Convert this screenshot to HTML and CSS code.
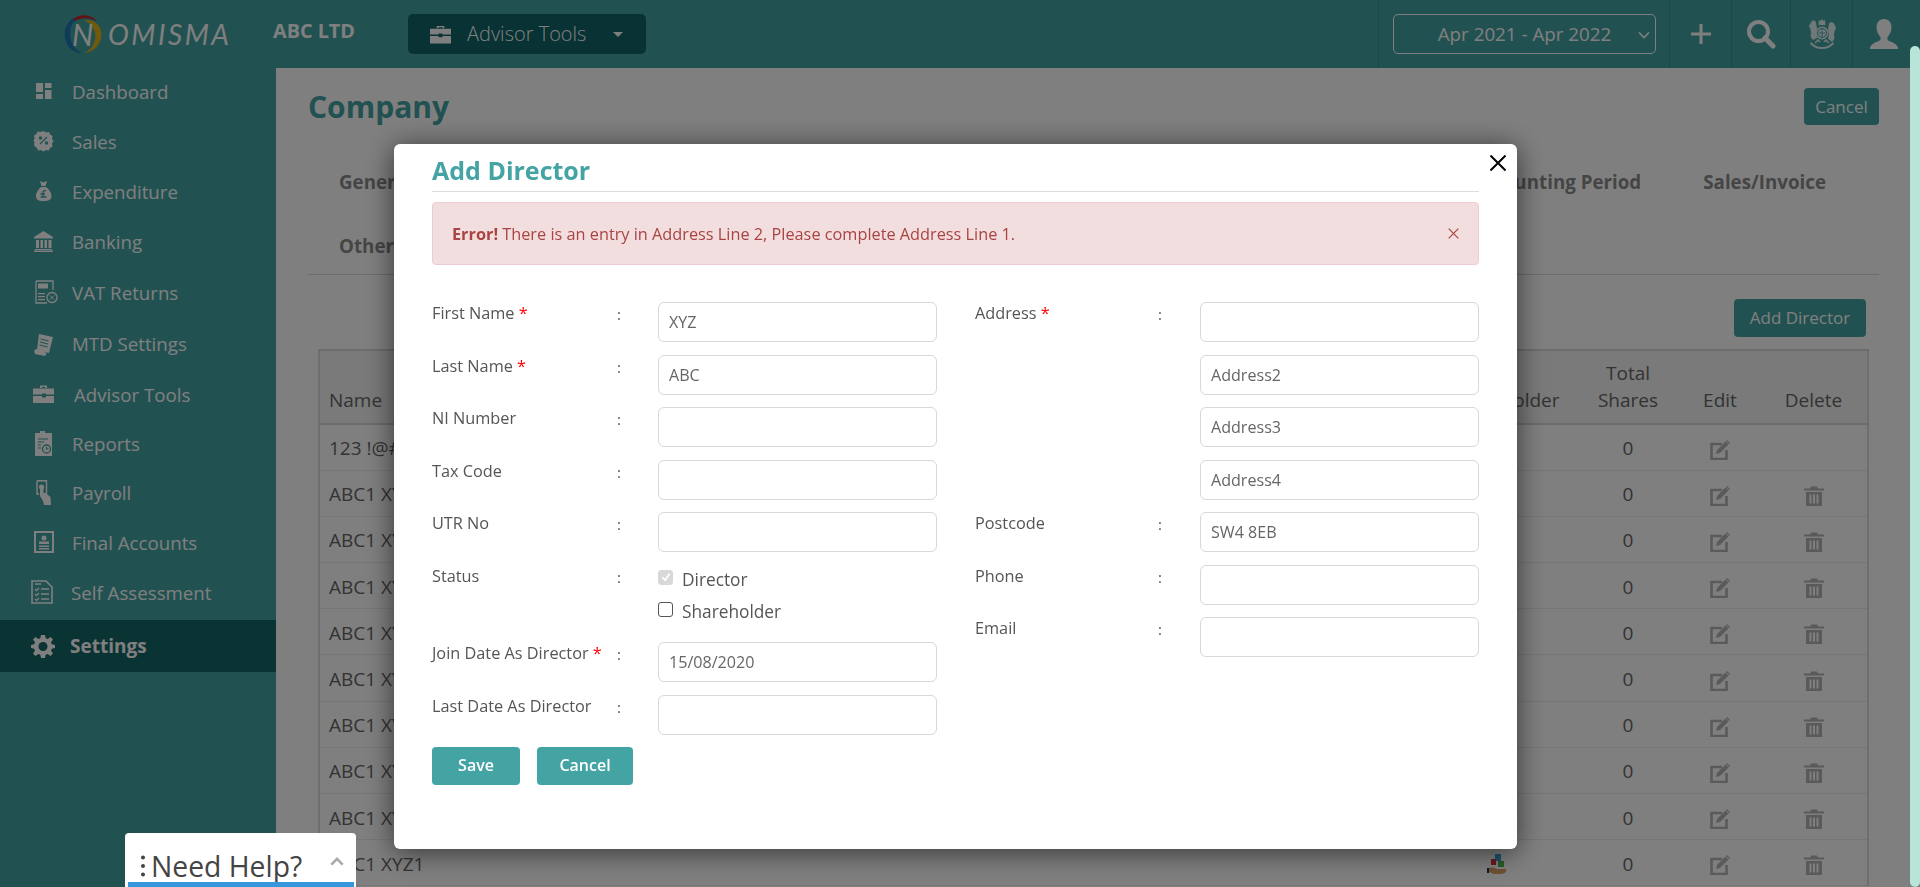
FILE: index.html
```html
<!DOCTYPE html>
<html lang="en">
<head>
<meta charset="utf-8">
<title>Add Director</title>
<link rel="stylesheet" href="styles.css">
</head>
<body>
<svg class="defs" width="0" height="0">
  <symbol id="i-edit" viewBox="0 0 20 20"><path d="M12 4H1.500v15h15v-9" fill="none" stroke="currentColor" stroke-width="2.600"/><path d="M6 14l1-4L15.500 1.500l3 3L10 13z" fill="currentColor"/><path d="M17 0l3 3-1 1-3-3z" fill="currentColor"/></symbol>
  <symbol id="i-trash" viewBox="0 0 20 20"><path d="M0 2.500h20v2H0zM6 2.500l1-2h6l1 2z" fill="currentColor"/><path d="M2 6h16v14H2zM5.500 8.500v9h2v-9zM9 8.500v9h2v-9zM12.500 8.500v9h2v-9z" fill="currentColor" fill-rule="evenodd"/></symbol>
</svg>

<header class="topbar">
  <div class="logo">
    <svg class="logo-ring" viewBox="0 0 60 60">
      <path d="M6 24C9 9 24 1 38 6c5 2 8 4 10 8-8-7-24-7-34 1-3 3-6 6-8 9z" fill="#c0262b"/>
      <path d="M14 9C3 17 0 32 6 44c4 8 12 13 21 14-9-5-15-12-16-24C10 25 12 17 18 12z" fill="#1f78b4"/>
      <path d="M30 12c12-2 22 4 24 16 2 13-7 27-24 30 10-5 15-13 16-24 0-9-6-19-16-22z" fill="#e4b51a"/>
    </svg>
    <span class="logo-n">N</span><span class="logo-text">OMISMA</span>
  </div>
  <div class="company">ABC LTD</div>
  <button class="tools" type="button">
    <svg class="tools-icon" viewBox="0 0 22 20"><path d="M7 4V1.500h8V4h-1.800V3H8.800v1z" fill="currentColor"/><path d="M0 4.500h22v6H13v-1H9v1H0zM0 12h9v1.500h4V12h9v8H0z" fill="currentColor"/></svg>
    <span class="tools-label">Advisor Tools</span>
    <span class="caret"></span>
  </button>
  <div class="top-right">
    <div class="period-cell">
      <div class="period"><span>Apr 2021 - Apr 2022</span>
        <svg class="period-chev" viewBox="0 0 12 8"><path d="M1 1.500l5 5 5-5" fill="none" stroke="currentColor" stroke-width="1.600"/></svg>
      </div>
    </div>
    <div class="top-icon w62">
      <svg width="22" height="24" viewBox="0 0 22 24"><path d="M9.500 2h3v8.500H21v3h-8.500V22h-3v-8.500H1v-3h8.500z" fill="currentColor"/></svg>
    </div>
    <div class="top-icon w59">
      <svg width="30" height="30" viewBox="0 0 30 30"><circle cx="12.500" cy="12.500" r="9.500" fill="none" stroke="currentColor" stroke-width="4"/><path d="M19 19l8 8" stroke="currentColor" stroke-width="5" stroke-linecap="round"/></svg>
    </div>
    <div class="top-icon w62">
      <svg class="crest" width="28" height="30" viewBox="0 0 28 30">
        <path d="M4 2c2-1 4 0 4 2l1 5-1 5 1 5-4 2c-2-2-3-4-2-7 0-3-1-5-2-7 1-2 2-4 3-5zM24 3c2 1 3 3 4 6-1 2-2 4-2 7 1 3 0 5-2 7l-4-3 1-5-1-5 1-5c0-1 1-2 3-2z" fill="currentColor"/>
        <path d="M11 1l1.500 1L14 0l1.500 2L17 1l.5 5h-7z" fill="currentColor"/>
        <circle cx="14" cy="14" r="6.500" fill="currentColor"/>
        <circle cx="14" cy="14" r="4.500" fill="none" stroke="#44a3a3" stroke-width="1"/>
        <path d="M14 10v8M11 14h6" stroke="#44a3a3" stroke-width=".8"/>
        <path d="M3 23c3 3 6 5 11 5s8-2 11-5l1 2c-3 3-7 5-12 5S5 28 2 25z" fill="currentColor"/>
        <path d="M7 24l3-3 2 2M21 24l-3-3-2 2" fill="none" stroke="currentColor" stroke-width="1.500"/>
      </svg>
    </div>
    <div class="top-icon w57">
      <svg width="28" height="30" viewBox="0 0 28 30"><path d="M14 0c5 0 7.500 4 7.500 8.500 0 4-2 7.500-4 9.500v3c3 2 9 3 10.500 7.500V30H0v-1.500C1.500 24 7.500 23 10.500 21v-3c-2-2-4-5.500-4-9.500C6.500 4 9 0 14 0z" fill="currentColor"/></svg>
    </div>
  </div>
</header>

<div class="shell">
  <nav class="sidebar">
    <a class="nav-item"><svg class="nav-icon" viewBox="0 0 24 24"><path d="M4 4h7v9H4zM13 4h6.500v5H13zM13 11h6.500v9H13zM4 15h7v5H4z" fill="currentColor"/></svg><span>Dashboard</span></a>
    <a class="nav-item"><svg class="nav-icon" viewBox="0 0 24 24"><path d="M11.500 2l2.500 1.500 3-.5 1 2.500 2.500 1.500-.5 3 1.500 2-1.500 2.500.5 3-2.500 1.500-1 2.500-3-.5-2.500 1.500-2.500-1.500-3 .5-1-2.500L2 16.500l.5-3L1.500 11.500 2.500 9.500 2 6.500 4.500 5l1-2.500 3 .5z" fill="currentColor"/><path d="M8 15l7-7" stroke="#44a3a3" stroke-width="1.300"/><circle cx="8.500" cy="9" r="1.700" fill="#44a3a3"/><circle cx="14.500" cy="14" r="1.700" fill="#44a3a3"/></svg><span>Sales</span></a>
    <a class="nav-item"><svg class="nav-icon" viewBox="0 0 24 24"><path d="M8 2l3 1.500L15 2l-1.500 5h-4zM9 8h5c3 2 5.500 6 5.500 9 0 4-3 5-8 5s-7.500-1-7.500-5c0-3 2.500-7 5-9z" fill="currentColor"/><path d="M14 12c-2-1-3 0-3 2v4h3.500M8.500 15h4.500M8.500 18h2" fill="none" stroke="#44a3a3" stroke-width="1.300"/></svg><span>Expenditure</span></a>
    <a class="nav-item"><svg class="nav-icon" viewBox="0 0 24 24"><path d="M11.500 2l9.500 6v1.500H2V8zM4 11h3v8H4zM8.500 11h2.500v8H8.500zM12.500 11h2.500v8h-2.500zM16.500 11h3v8h-3zM3 20h17v1H3zM2 21.500h19V23H2z" fill="currentColor"/></svg><span>Banking</span></a>
    <a class="nav-item h52"><svg class="nav-icon" viewBox="0 0 24 24"><g transform="translate(1 0)"><path d="M3 1h17v9" fill="none" stroke="currentColor" stroke-width="1.300"/><path d="M3 1v22h11" fill="none" stroke="currentColor" stroke-width="1.300"/><path d="M5 3.500h10v5H5zM5 13h7v1.200H5zM5 16h7v1.200H5zM5 19h7v1.200H5z" fill="currentColor"/><circle cx="19" cy="17.500" r="5" fill="none" stroke="currentColor" stroke-width="1.300"/><path d="M17 15.500l4 4M21 15.500l-4 4" stroke="currentColor"/></g></svg><span>VAT Returns</span></a>
    <a class="nav-item h51"><svg class="nav-icon" viewBox="0 0 24 24"><path d="M7 2l14 3-4 16-12-3zM2 19l2-2 11 4-2 3-10-2z" fill="currentColor"/><path d="M8.500 7l8 2M8 10l8 2M7.500 13l8 2" stroke="#44a3a3" stroke-width="1.200"/></svg><span>MTD Settings</span></a>
    <a class="nav-item tools-item"><svg class="nav-icon" viewBox="0 0 24 24"><g transform="translate(0 2)"><path d="M8 4V1.500h7V4h-1.800V3H9.800v1z" fill="currentColor"/><path d="M1 4.500h21v6h-8v-1h-4v1H1zM1 12h9v1.500h4V12h8v7H1z" fill="currentColor"/></g></svg><span>Advisor Tools</span></a>
    <a class="nav-item h48"><svg class="nav-icon" viewBox="0 0 24 24"><path d="M3 2h5V0h5v2h7v23H3z" fill="currentColor"/><circle cx="14.500" cy="18" r="4" fill="none" stroke="#44a3a3" stroke-width="1.300"/><path d="M6 8h10M6 11h6M6 14h3M6 17h3M14.500 16v2h2" fill="none" stroke="#44a3a3" stroke-width="1.200"/></svg><span>Reports</span></a>
    <a class="nav-item"><svg class="nav-icon" viewBox="0 0 24 24"><path d="M5 .700h9.500V14H12" fill="none" stroke="currentColor" stroke-width="1.400"/><path d="M5 .700V14h2" fill="none" stroke="currentColor" stroke-width="1.400"/><circle cx="9.500" cy="7" r="2.500" fill="currentColor"/><path d="M8 7h3.500v6h2l5 4 .5 8h-7l-1-4-3-5z" fill="currentColor"/></svg><span>Payroll</span></a>
    <a class="nav-item"><svg class="nav-icon" viewBox="0 0 24 24"><path d="M3 2h18v20H3z" fill="none" stroke="currentColor" stroke-width="2"/><circle cx="12" cy="8" r="2.500" fill="currentColor"/><path d="M7 11.500h10V14H7zM7 15.500h10V17H7zM7 18h10v1.500H7z" fill="currentColor"/></svg><span>Final Accounts</span></a>
    <a class="nav-item self-item"><svg class="nav-icon" viewBox="0 0 24 24"><g transform="translate(-2 0)"><path d="M2 1h14l6 6v16H2z" fill="none" stroke="currentColor" stroke-width="1.600"/><path d="M5 9l1.500 1.500L9 8M5 14l1.500 1.500L9 13M5 19l1.500 1.500L9 18M11 9h8M11 14h8M11 19h8M5 4h6" fill="none" stroke="currentColor" stroke-width="1.300"/></g></svg><span>Self Assessment</span></a>
    <a class="nav-item active"><svg class="nav-icon" viewBox="0 0 24 24"><g transform="translate(-1 0)"><path d="M10 1h4l.700 3.200 2 .8L19.500 3l2.500 2.500-2 2.800.8 2L24 11v3l-3.200.7-.8 2 2 2.800-2.500 2.500-2.800-2-2 .8L14 24h-4l-.7-3.200-2-.8L4.500 22 2 19.500l2-2.800-.8-2L0 14v-3l3.200-.7.8-2-2-2.800L4.500 3l2.800 2 2-.8z" fill="currentColor"/><circle cx="12" cy="12.500" r="4.500" fill="#146667"/></g></svg><span>Settings</span></a>
  </nav>

  <main class="page">
    <div class="page-head">
      <h1 class="page-title">Company</h1>
      <button class="btn-dark cancel-top" type="button">Cancel</button>
    </div>
    <div class="tabs">
      <div class="tab-line">
        <span class="tab">General</span>
        <span class="tab-right"><span class="tab">Accounting Period</span><span class="tab">Sales/Invoice</span></span>
      </div>
      <div class="tab-line"><span class="tab">Others</span></div>
    </div>
    <div class="add-row"><button class="btn-dark add-btn" type="button">Add Director</button></div>
    <table class="grid">
      <thead>
        <tr><th class="c-name">Name</th><th class="c-holder">Shareholder</th><th class="c-num">Total<br>Shares</th><th class="c-edit">Edit</th><th class="c-del">Delete</th></tr>
      </thead>
      <tbody>
        <tr><td class="c-name">123 !@#</td><td></td><td>0</td><td><svg class="act"><use href="#i-edit"/></svg></td><td></td></tr>
        <tr><td class="c-name">ABC1 XYZ1</td><td></td><td>0</td><td><svg class="act"><use href="#i-edit"/></svg></td><td><svg class="act"><use href="#i-trash"/></svg></td></tr>
        <tr><td class="c-name">ABC1 XYZ1</td><td></td><td>0</td><td><svg class="act"><use href="#i-edit"/></svg></td><td><svg class="act"><use href="#i-trash"/></svg></td></tr>
        <tr><td class="c-name">ABC1 XYZ1</td><td></td><td>0</td><td><svg class="act"><use href="#i-edit"/></svg></td><td><svg class="act"><use href="#i-trash"/></svg></td></tr>
        <tr><td class="c-name">ABC1 XYZ1</td><td></td><td>0</td><td><svg class="act"><use href="#i-edit"/></svg></td><td><svg class="act"><use href="#i-trash"/></svg></td></tr>
        <tr><td class="c-name">ABC1 XYZ1</td><td></td><td>0</td><td><svg class="act"><use href="#i-edit"/></svg></td><td><svg class="act"><use href="#i-trash"/></svg></td></tr>
        <tr><td class="c-name">ABC1 XYZ1</td><td></td><td>0</td><td><svg class="act"><use href="#i-edit"/></svg></td><td><svg class="act"><use href="#i-trash"/></svg></td></tr>
        <tr><td class="c-name">ABC1 XYZ1</td><td></td><td>0</td><td><svg class="act"><use href="#i-edit"/></svg></td><td><svg class="act"><use href="#i-trash"/></svg></td></tr>
        <tr><td class="c-name">ABC1 XYZ1</td><td></td><td>0</td><td><svg class="act"><use href="#i-edit"/></svg></td><td><svg class="act"><use href="#i-trash"/></svg></td></tr>
        <tr><td class="c-name">ABC1 XYZ1</td><td>
          <svg class="blocks" viewBox="0 0 20 20"><path d="M8 0h6v7H8z" fill="#3aa7d8"/><path d="M4 5h5v6H4z" fill="#d8343c"/><path d="M11 7h6v6h-6z" fill="#58b848"/><path d="M0 14h2v5H0z" fill="#1c2f6b"/><path d="M2 14c3-1 6 0 8 1h9c1 2-1 5-5 5H7l-5-2z" fill="#d9a066"/></svg>
        </td><td>0</td><td><svg class="act"><use href="#i-edit"/></svg></td><td><svg class="act"><use href="#i-trash"/></svg></td></tr>
      </tbody>
    </table>
  </main>
</div>

<div class="backdrop"></div>

<section class="modal">
  <button class="modal-close" type="button" aria-label="Close">
    <svg width="16" height="16" viewBox="0 0 16 16"><path d="M.500.500l15 15M15.500.500l-15 15" stroke="#000" stroke-width="2"/></svg>
  </button>
  <h2 class="modal-title">Add Director</h2>
  <div class="alert">
    <span><b>Error!</b> There is an entry in Address Line 2, Please complete Address Line 1.</span>
    <svg class="alert-x" width="11" height="11" viewBox="0 0 11 11"><path d="M.700.700l9.600 9.600M10.300.700L.700 10.300" stroke="#a94442" stroke-width="1.200"/></svg>
  </div>
  <form class="form">
    <div class="col">
      <div class="row"><label class="lbl">First Name <i>*</i></label><span class="colon">:</span><div class="field">XYZ</div></div>
      <div class="row"><label class="lbl">Last Name <i>*</i></label><span class="colon">:</span><div class="field">ABC</div></div>
      <div class="row"><label class="lbl">NI Number</label><span class="colon">:</span><div class="field"></div></div>
      <div class="row"><label class="lbl">Tax Code</label><span class="colon">:</span><div class="field"></div></div>
      <div class="row"><label class="lbl">UTR No</label><span class="colon">:</span><div class="field"></div></div>
      <div class="row status-row"><label class="lbl">Status</label><span class="colon">:</span>
        <div class="checks">
          <div class="check"><span class="box checked"><svg width="11" height="11" viewBox="0 0 11 11"><path d="M1.500 6l3 3 5-7" fill="none" stroke="#fff" stroke-width="2"/></svg></span>Director</div>
          <div class="check"><span class="box"></span>Shareholder</div>
        </div>
      </div>
      <div class="row"><label class="lbl">Join Date As Director <i>*</i></label><span class="colon">:</span><div class="field">15/08/2020</div></div>
      <div class="row"><label class="lbl">Last Date As Director</label><span class="colon">:</span><div class="field"></div></div>
      <div class="actions"><button class="btn-teal save" type="button">Save</button><button class="btn-teal cancel" type="button">Cancel</button></div>
    </div>
    <div class="col col-right">
      <div class="row"><label class="lbl">Address <i>*</i></label><span class="colon">:</span><div class="field"></div></div>
      <div class="row"><span></span><span></span><div class="field">Address2</div></div>
      <div class="row"><span></span><span></span><div class="field">Address3</div></div>
      <div class="row"><span></span><span></span><div class="field">Address4</div></div>
      <div class="row"><label class="lbl">Postcode</label><span class="colon">:</span><div class="field">SW4 8EB</div></div>
      <div class="row"><label class="lbl">Phone</label><span class="colon">:</span><div class="field"></div></div>
      <div class="row"><label class="lbl">Email</label><span class="colon">:</span><div class="field"></div></div>
    </div>
  </form>
</section>

<aside class="help">
  <span class="help-dots"></span><span class="help-text">Need Help?</span>
  <svg class="help-chev" width="14" height="9" viewBox="0 0 16 10"><path d="M1.500 8.500L8 2l6.500 6.500" fill="none" stroke="#aaa" stroke-width="3"/></svg>
</aside>

<div class="scroll-thumb"></div>
</body>
</html>
```

FILE: styles.css
```css
* { box-sizing: border-box; }
html, body { height: 100%; }
body {
  margin: 0;
  height: 887px;
  overflow: hidden;
  background: #fff;
  font-family: "Open Sans", "Liberation Sans", sans-serif;
  color: #555;
}
.defs { position: absolute; }
button { font-family: inherit; border: 0; cursor: pointer; }

/* top bar */
.topbar {
  height: 68px;
  background: #44a3a3;
  display: flex;
  align-items: center;
  color: #fff;
}
.logo {
  width: 273px;
  padding-left: 72px;
  display: flex;
  align-items: center;
  position: relative;
  height: 68px;
}
.logo-ring { position: absolute; left: 62px; top: 12px; width: 44px; height: 43px; }
.logo-n {
  position: relative;
  width: 36px;
  font: italic 400 30px "Lato", sans-serif;
  color: #fff;
  margin-top: -1px;
}
.logo-text {
  position: relative;
  font: italic 400 28px "Lato", sans-serif;
  letter-spacing: 2.500px;
  color: #fff;
  margin-top: -1px;
}
.company { width: 135px; font-size: 19.800px; font-weight: 700; margin-top: -7px; }
.tools {
  width: 238px;
  height: 40px;
  margin-top: -1px;
  border-radius: 5px;
  background: #106466;
  color: #fff;
  display: flex;
  align-items: center;
  padding: 0 0 0 22px;
}
.tools-icon { width: 21px; height: 20px; }
.tools-label { margin-left: 16px; font-size: 20px; font-weight: 300; width: 136px; text-align: left; }
.caret { width: 0; height: 0; border: 5px solid transparent; border-top-color: #fff; border-bottom: 0; margin-left: 10px; margin-top: 2px; }
.top-right { margin-left: auto; display: flex; height: 68px; margin-right: 5px; }
.period-cell { width: 292px; border-left: 1px solid #3b8f8f; border-right: 1px solid #3b8f8f; padding: 14px 14px 0; }
.period {
  height: 40px;
  width: 263px;
  border: 1px solid #fff;
  border-radius: 5px;
  display: flex;
  align-items: center;
  justify-content: center;
  position: relative;
}
.period span { margin-left: 0; font-size: 18.800px; }
.period-chev { position: absolute; right: 5px; top: 16px; width: 12px; height: 8px; }
.top-icon { display: flex; align-items: center; justify-content: center; border-right: 1px solid #3b8f8f; color: #fff; }
.top-icon:last-child { border-right: 0; }
.crest { opacity: .85; }
.w62 { width: 62px; }
.w59 { width: 59px; }
.w57 { width: 62px; }

/* layout */
.shell { display: flex; height: 819px; }
.sidebar { width: 276px; background: #44a3a3; color: #fff; flex: none; }
.nav-item {
  height: 50px;
  display: flex;
  align-items: center;
  padding-left: 32px;
  font-size: 18.700px;
  gap: 16px;
}
.nav-item:first-child { margin-top: -2px; }
.nav-item.h52 { height: 52px; }
.nav-item.h51 { height: 51px; }
.nav-item.h48 { height: 48px; }
.nav-icon { width: 24px; height: 24px; flex: none; overflow: visible; }
.nav-item.tools-item { gap: 18px; }
.nav-item.self-item { gap: 15px; }
.nav-item.active {
  background: #146667;
  height: 52px;
  margin-top: 3px;
  font-weight: 700;
  font-size: 19px;
  gap: 14px;
}

/* page */
.page { flex: 1; padding: 0 41px 0 32px; min-width: 0; }
.page-head { display: flex; justify-content: space-between; align-items: flex-start; height: 87px; padding-top: 20px; }
.page-title { margin: 0; font-size: 30px; font-weight: 700; color: #44a3a3; line-height: 38px; }
.btn-dark { background: #44a3a3; color: #fff; font-size: 17px; border-radius: 4px; }
.cancel-top { width: 75px; height: 37px; }
.tabs { border-bottom: 1px solid #d8d8d8; height: 120px; padding: 0 0 0 31px; }
.tab-line { height: 64px; display: flex; justify-content: space-between; align-items: center; padding-bottom: 12px; }
.tab { font-size: 18.750px; font-weight: 700; color: #8a8a8a; white-space: nowrap; }
.tab-right { display: flex; gap: 62px; margin-right: 53px; }
.add-row { display: flex; justify-content: flex-end; padding: 24px 13px 12px 0; }
.add-btn { width: 132px; height: 38px; padding: 0 0 2px; }
.grid {
  width: 1551px;
  margin-left: 10px;
  border-collapse: collapse;
  table-layout: fixed;
  font-size: 19px;
  color: #666;
  border-left: 2px solid #dcdcdc;
  border-right: 2px solid #dcdcdc;
}
.grid th {
  background: #f4f4f4;
  height: 74px;
  font-weight: 400;
  vertical-align: bottom;
  padding: 0 0 9px;
  line-height: 27px;
  border-top: 2px solid #d8d8d8;
  border-bottom: 2px solid #d8d8d8;
}
.grid td { height: 46.200px; border-bottom: 1px solid #ececec; padding: 2px 0 0; text-align: center; }
.grid .c-name { text-align: left; padding-left: 9px; }
.grid th.c-holder { width: 158px; padding-left: 16px; }
.c-num { width: 104px; }
.c-edit { width: 80px; }
.c-del { width: 108px; }
.act { width: 20px; height: 20px; color: #b4b4b4; display: block; margin: 3px auto 0; }
.blocks { width: 20px; height: 20px; display: block; margin: 0 auto; }

/* modal */
.backdrop { position: fixed; inset: 0; background: rgba(0, 0, 0, .5); }
.modal {
  position: fixed;
  left: 394px;
  top: 144px;
  width: 1123px;
  height: 705px;
  background: #fff;
  border-radius: 6px;
  box-shadow: 0 3px 28px rgba(0, 0, 0, .6);
  padding: 0 38px;
}
.modal-close { position: absolute; right: 11px; top: 11px; width: 16px; height: 16px; padding: 0; background: none; }
.modal-close svg { display: block; }
.modal-title {
  margin: 0;
  height: 48px;
  border-bottom: 1px solid #ddd;
  color: #44a3a3;
  font-size: 25px;
  font-weight: 700;
  line-height: 26px;
  padding-top: 13px;
}
.alert {
  margin-top: 10px;
  height: 63px;
  background: #f2dede;
  border: 1px solid #ebccd1;
  border-radius: 4px;
  color: #a94442;
  font-size: 16.300px;
  display: flex;
  align-items: center;
  justify-content: space-between;
  padding: 0 19px;
}
.form { display: flex; margin-top: 37px; }
.col { width: 543px; }
.col-right { width: 504px; }
.row {
  display: grid;
  grid-template-columns: 185px 41px 279px;
  min-height: 40px;
  margin-bottom: 12.500px;
}
.col-right .row { grid-template-columns: 183px 42px 279px; }
.lbl { font-size: 16.300px; line-height: 22px; color: #555; }
.lbl i { color: #f00; font-style: normal; }
.colon { font-size: 15px; line-height: 24px; color: #555; }
.field {
  height: 40px;
  border: 1px solid #d8d8d8;
  border-radius: 6px;
  padding-left: 10px;
  font-size: 16.100px;
  line-height: 39px;
  color: #666;
  background: #fff;
}
.status-row { height: 65px; }
.checks { display: flex; flex-direction: column; margin-top: -1px; }
.check { display: flex; align-items: center; height: 32px; font-size: 17.300px; color: #555; }
.box { width: 15px; height: 15px; border: 1.500px solid #555; border-radius: 3px; margin: -5px 9px 0 0; flex: none; }
.box.checked { background: #d8d8d8; border-color: #d8d8d8; display: flex; align-items: center; justify-content: center; }
.box.checked svg { width: 10px; height: 10px; }
.actions { display: flex; gap: 17px; }
.btn-teal { background: #44a3a3; color: #fff; font-size: 16px; font-weight: 600; height: 38px; border-radius: 4px; padding: 0 0 2px; }
.save { width: 88px; }
.cancel { width: 96px; }

/* help */
.help {
  position: fixed;
  left: 125px;
  bottom: 0;
  width: 231px;
  height: 54px;
  background: #fff;
  border-radius: 4px 4px 0 0;
  display: flex;
  align-items: center;
  color: #444;
  padding: 11px 0 0 16px;
}
.help::after { content: ""; position: absolute; left: 3px; right: 2px; bottom: 0; height: 5px; background: #3498db; }
.help-dots {
  width: 4px;
  height: 4px;
  border-radius: 50%;
  background: #444;
  box-shadow: 0 -8.500px 0 #444, 0 8.500px 0 #444;
  margin-right: 6px;
}
.help-text { font-size: 28.300px; line-height: 40px; white-space: nowrap; }
.help-chev { position: absolute; right: 12px; top: 24px; }

/* scrollbar thumb */
.scroll-thumb {
  position: fixed;
  right: 0;
  top: 46px;
  bottom: 0;
  width: 10px;
  background: #b9e4d8;
  border-radius: 5px;
}
```
